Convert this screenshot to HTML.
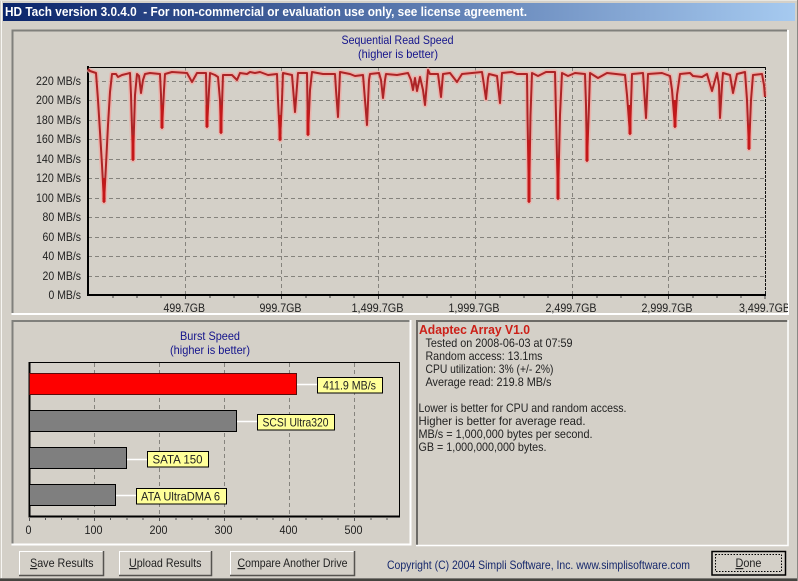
<!DOCTYPE html>
<html><head><meta charset="utf-8"><title>HD Tach</title>
<style>
html,body{margin:0;padding:0;background:#d4d0c8;overflow:hidden}
svg{display:block;position:absolute;left:0;top:0}
text{font-family:"Liberation Sans",sans-serif;font-size:12px;fill:#222}
.b{fill:#14148c}
.u{text-decoration:underline}
</style></head><body>
<svg width="798" height="581" viewBox="0 0 798 581" xmlns="http://www.w3.org/2000/svg">
<defs>
<linearGradient id="tg" x1="0" x2="1" y1="0" y2="0"><stop offset="0" stop-color="#0a246a"/><stop offset="1" stop-color="#a6caf0"/></linearGradient>
<clipPath id="c1"><rect x="0" y="0" width="788" height="581"/></clipPath>
</defs>
<rect width="798" height="581" fill="#d4d0c8"/>
<rect x="0" y="0" width="798" height="1" fill="#e8e6e0"/>
<rect x="1" y="1" width="1" height="578" fill="#f6f5f2"/>
<rect x="0" y="578" width="798" height="1" fill="#7c7a76"/>
<rect x="0" y="579" width="798" height="2" fill="#45443f"/>
<rect x="797" y="0" width="1" height="581" fill="#8a8884"/>
<rect x="3" y="3" width="792" height="18" fill="url(#tg)"/>
<text x="5" y="16" textLength="522" lengthAdjust="spacingAndGlyphs" style="fill:#fff;font-weight:bold;font-size:12.5px" xml:space="preserve">HD Tach version 3.0.4.0  - For non-commercial or evaluation use only, see license agreement.</text>

<!-- top panel -->
<path d="M12.5 314V30.500H787" fill="none" stroke="#80807c" stroke-width="2"/>
<path d="M11.500 314H788V30" fill="none" stroke="#fff" stroke-width="2"/>
<text class="b" x="341.500" y="44" textLength="112" lengthAdjust="spacingAndGlyphs">Sequential Read Speed</text>
<text class="b" x="358" y="58" textLength="80" lengthAdjust="spacingAndGlyphs">(higher is better)</text>

<g stroke="#85837d" stroke-width="1" stroke-dasharray="4 3" fill="none">
<path d="M88 81.500H765M88 100.500H765M88 120.500H765M88 139.500H765M88 159.500H765M88 178.500H765M88 198.500H765M88 217.500H765M88 237.500H765M88 256.500H765M88 276.500H765"/>
<path d="M185.500 67V295M281.500 67V295M378.500 67V295M475.500 67V295M572.500 67V295M668.500 67V295"/>
</g>
<path d="M88 67.500H765" stroke="#000" stroke-width="1"/>
<path d="M765.500 67V295" stroke="#111" stroke-width="1" stroke-dasharray="3 1"/>
<path d="M88 66V296" stroke="#000" stroke-width="2"/>
<path d="M87 295H766" stroke="#000" stroke-width="2"/>
<path d="M113 296v2M137 296v2M161 296v2M185.500 296v3M210 296v2M234 296v2M258 296v2M281.500 296v3M306 296v2M330 296v2M354 296v2M378.500 296v3M403 296v2M427 296v2M451 296v2M475.500 296v3M500 296v2M524 296v2M548 296v2M572.500 296v3M597 296v2M621 296v2M645 296v2M668.500 296v3M693 296v2M717 296v2M741 296v2M765 296v3" stroke="#444" stroke-width="1"/>

<text x="36" y="85" textLength="45" lengthAdjust="spacingAndGlyphs">220 MB/s</text>
<text x="36" y="104" textLength="45" lengthAdjust="spacingAndGlyphs">200 MB/s</text>
<text x="36" y="124" textLength="45" lengthAdjust="spacingAndGlyphs">180 MB/s</text>
<text x="36" y="143" textLength="45" lengthAdjust="spacingAndGlyphs">160 MB/s</text>
<text x="36" y="163" textLength="45" lengthAdjust="spacingAndGlyphs">140 MB/s</text>
<text x="36" y="182" textLength="45" lengthAdjust="spacingAndGlyphs">120 MB/s</text>
<text x="36" y="202" textLength="45" lengthAdjust="spacingAndGlyphs">100 MB/s</text>
<text x="42.500" y="221" textLength="38.500" lengthAdjust="spacingAndGlyphs">80 MB/s</text>
<text x="42.500" y="241" textLength="38.500" lengthAdjust="spacingAndGlyphs">60 MB/s</text>
<text x="42.500" y="260" textLength="38.500" lengthAdjust="spacingAndGlyphs">40 MB/s</text>
<text x="42.500" y="280" textLength="38.500" lengthAdjust="spacingAndGlyphs">20 MB/s</text>
<text x="48.500" y="299" textLength="32.500" lengthAdjust="spacingAndGlyphs">0 MB/s</text>

<g clip-path="url(#c1)">
<text x="163.500" y="312" textLength="41.500" lengthAdjust="spacingAndGlyphs">499.7GB</text>
<text x="259.500" y="312" textLength="42" lengthAdjust="spacingAndGlyphs">999.7GB</text>
<text x="351.500" y="312" textLength="52" lengthAdjust="spacingAndGlyphs">1,499.7GB</text>
<text x="448.500" y="312" textLength="51" lengthAdjust="spacingAndGlyphs">1,999.7GB</text>
<text x="545.500" y="312" textLength="51" lengthAdjust="spacingAndGlyphs">2,499.7GB</text>
<text x="641.500" y="312" textLength="51" lengthAdjust="spacingAndGlyphs">2,999.7GB</text>
<text x="739" y="312" textLength="51" lengthAdjust="spacingAndGlyphs">3,499.7GB</text>
</g>

<g fill="none" stroke-linejoin="round">
<polyline stroke="#f4a8a2" stroke-width="5" opacity=".75" points="88,69 90,71 96,73 98,100 100,132 102,165 104,202 106,165 108,125 110,92 112,74 116,74 118,77 122,75 130,73 131,95 133,160 135,95 137,74 139,76 141,93 143,80 145,74 150,73 160,74 161,95 162,128 164,90 165,74 172,72 187,73 192,82 197,73 206,73 207,127 209,90 210,73 215,75 218,77 220,100 221,133 223,75 232,75 237,80 240,73 247,74 250,72 255,73 260,72 268,75 277,74 278,100 280,140 282,100 283,73 292,75 295,112 298,73 307,73 308,135 310,90 312,72 323,74 335,74 336,90 338,117 340,72 350,74 355,76 363,75 365,100 367,125 369,80 370,74 379,73 381,80 383,98 385,80 386,74 397,75 408,73 411,80 413,90 415,78 417,91 420,77 423,90 425,105 428,70 430,74 438,74 441,97 443,74 450,73 457,82 462,74 482,72 484,85 486,99 488,78 489,74 497,76 500,103 502,73 512,72 517,74 527,74 527.5,115 529,202 530.5,115 532,73 538,76 546,72 555,72 556,115 558,199 560,115 562,73 568,76 575,73 585,74 586,105 587,161 589,105 590,73 598,78 607,73 625,75 627,95 630,134 632,74 643,73 646,118 648,74 662,73 670,76 672,90 675,127 677,95 680,74 690,73 693,76 702,77 707,74 712,91 717,73 719,85 720,118 722,85 723,73 730,75 733,93 737,74 745,72 747,100 749,149 751,100 753,75 762,74 764,85 765,97"/>
<polyline stroke="#ad2426" stroke-width="2" points="88,69 90,71 96,73 98,100 100,132 102,165 104,202 106,165 108,125 110,92 112,74 116,74 118,77 122,75 130,73 131,95 133,160 135,95 137,74 139,76 141,93 143,80 145,74 150,73 160,74 161,95 162,128 164,90 165,74 172,72 187,73 192,82 197,73 206,73 207,127 209,90 210,73 215,75 218,77 220,100 221,133 223,75 232,75 237,80 240,73 247,74 250,72 255,73 260,72 268,75 277,74 278,100 280,140 282,100 283,73 292,75 295,112 298,73 307,73 308,135 310,90 312,72 323,74 335,74 336,90 338,117 340,72 350,74 355,76 363,75 365,100 367,125 369,80 370,74 379,73 381,80 383,98 385,80 386,74 397,75 408,73 411,80 413,90 415,78 417,91 420,77 423,90 425,105 428,70 430,74 438,74 441,97 443,74 450,73 457,82 462,74 482,72 484,85 486,99 488,78 489,74 497,76 500,103 502,73 512,72 517,74 527,74 527.5,115 529,202 530.5,115 532,73 538,76 546,72 555,72 556,115 558,199 560,115 562,73 568,76 575,73 585,74 586,105 587,161 589,105 590,73 598,78 607,73 625,75 627,95 630,134 632,74 643,73 646,118 648,74 662,73 670,76 672,90 675,127 677,95 680,74 690,73 693,76 702,77 707,74 712,91 717,73 719,85 720,118 722,85 723,73 730,75 733,93 737,74 745,72 747,100 749,149 751,100 753,75 762,74 764,85 765,97"/>
<path d="M104 178V202M133 135V160M162 105V128M207 105V127M221 105V133M280 115V140M308 110V135M529 140V202M558 158V199M587 130V161M630 105V134M675 100V127M749 125V149" stroke="#c4181a" stroke-width="3"/>
</g>

<!-- burst panel -->
<path d="M12.500 544V321H410" fill="none" stroke="#80807c" stroke-width="2"/>
<path d="M11.500 544.500H410.500V320" fill="none" stroke="#fff" stroke-width="2"/>
<text class="b" x="180" y="340" textLength="60" lengthAdjust="spacingAndGlyphs">Burst Speed</text>
<text class="b" x="170" y="354" textLength="80" lengthAdjust="spacingAndGlyphs">(higher is better)</text>

<g stroke="#85837d" stroke-dasharray="4 3" fill="none">
<path d="M94.500 363V516M159.500 363V516M224.500 363V516M289.500 363V516M354.500 363V516"/>
</g>
<path d="M29 362.500H399.500V517" fill="none" stroke="#000" stroke-width="1"/>
<path d="M29.500 362V517" stroke="#000" stroke-width="2"/>
<path d="M28.500 516.500H400" stroke="#000" stroke-width="2"/>
<path d="M29.500 518v3M45.500 518v2M61.500 518v2M78 518v2M94.500 518v3M110.500 518v2M127 518v2M143 518v2M159.500 518v3M176 518v2M192 518v2M208 518v2M224.500 518v3M241 518v2M257 518v2M273 518v2M289.500 518v3M306 518v2M322 518v2M338 518v2M354.500 518v3M371 518v2M387 518v2" stroke="#555"/>

<rect x="29.500" y="373.500" width="267" height="21" fill="#fe0000" stroke="#5a0c0c"/>
<rect x="29.500" y="410.500" width="207" height="21" fill="#7f7f7f" stroke="#000"/>
<rect x="29.500" y="447.500" width="97" height="21" fill="#7f7f7f" stroke="#000"/>
<rect x="29.500" y="484.500" width="86" height="21" fill="#7f7f7f" stroke="#000"/>
<path d="M297 384.500H317M237 421.500H257M127 459.500H147M116 495.500H136" stroke="#fff" stroke-width="1.500"/>
<rect x="317.500" y="377.500" width="65" height="15.500" fill="#ffff99" stroke="#000"/>
<rect x="257.500" y="414.500" width="77" height="15.500" fill="#ffff99" stroke="#000"/>
<rect x="147.500" y="451.500" width="61" height="15.500" fill="#ffff99" stroke="#000"/>
<rect x="136.500" y="488.500" width="90" height="15.500" fill="#ffff99" stroke="#000"/>
<text x="323" y="389.500" textLength="53" lengthAdjust="spacingAndGlyphs">411.9 MB/s</text>
<text x="262.500" y="426.500" textLength="66" lengthAdjust="spacingAndGlyphs">SCSI Ultra320</text>
<text x="152.500" y="463.500" textLength="50" lengthAdjust="spacingAndGlyphs">SATA 150</text>
<text x="141" y="500.500" textLength="79" lengthAdjust="spacingAndGlyphs">ATA UltraDMA 6</text>
<text x="25.500" y="534" textLength="6" lengthAdjust="spacingAndGlyphs">0</text>
<text x="84.500" y="534" textLength="18" lengthAdjust="spacingAndGlyphs">100</text>
<text x="149.500" y="534" textLength="18" lengthAdjust="spacingAndGlyphs">200</text>
<text x="214.500" y="534" textLength="18" lengthAdjust="spacingAndGlyphs">300</text>
<text x="279.500" y="534" textLength="18" lengthAdjust="spacingAndGlyphs">400</text>
<text x="344.500" y="534" textLength="18" lengthAdjust="spacingAndGlyphs">500</text>

<!-- info panel -->
<path d="M417 545V321H788" fill="none" stroke="#6c6a66" stroke-width="2"/>
<path d="M416 545.500H788V320" fill="none" stroke="#fff" stroke-width="1.500"/>
<text x="419" y="334" textLength="111" lengthAdjust="spacingAndGlyphs" style="fill:#cc2018;font-weight:bold;font-size:13px">Adaptec Array V1.0</text>
<text x="425.500" y="347" textLength="147" lengthAdjust="spacingAndGlyphs">Tested on 2008-06-03 at 07:59</text>
<text x="425.500" y="360" textLength="117" lengthAdjust="spacingAndGlyphs">Random access: 13.1ms</text>
<text x="425.500" y="373" textLength="128" lengthAdjust="spacingAndGlyphs">CPU utilization: 3% (+/- 2%)</text>
<text x="425.500" y="386" textLength="126" lengthAdjust="spacingAndGlyphs">Average read: 219.8 MB/s</text>
<text x="418.500" y="412" textLength="208" lengthAdjust="spacingAndGlyphs">Lower is better for CPU and random access.</text>
<text x="418.500" y="425" textLength="167" lengthAdjust="spacingAndGlyphs">Higher is better for average read.</text>
<text x="418.500" y="438" textLength="174" lengthAdjust="spacingAndGlyphs">MB/s = 1,000,000 bytes per second.</text>
<text x="418.500" y="451" textLength="128" lengthAdjust="spacingAndGlyphs">GB = 1,000,000,000 bytes.</text>

<!-- buttons -->
<g fill="none">
<path d="M19.500 575V551.500H103" stroke="#fff"/><path d="M19 575.500H103.500V551" stroke="#55534f" stroke-width="1.500"/>
<path d="M119.500 575V551.500H211" stroke="#fff"/><path d="M119 575.500H211.500V551" stroke="#55534f" stroke-width="1.500"/>
<path d="M230.500 575V551.500H354" stroke="#fff"/><path d="M230 575.500H354.500V551" stroke="#55534f" stroke-width="1.500"/>
<rect x="712" y="551.500" width="73.500" height="23.500" stroke="#000" stroke-width="1.500"/>
<rect x="715.500" y="554.500" width="66" height="17" stroke="#000" stroke-width="1" stroke-dasharray="1.500 1.500"/>
</g>
<text x="30" y="567" textLength="63.500" lengthAdjust="spacingAndGlyphs"><tspan class="u">S</tspan>ave Results</text>
<text x="129" y="567" textLength="72.500" lengthAdjust="spacingAndGlyphs"><tspan class="u">U</tspan>pload Results</text>
<text x="237.500" y="567" textLength="110" lengthAdjust="spacingAndGlyphs"><tspan class="u">C</tspan>ompare Another Drive</text>
<text x="735.500" y="567" textLength="26" lengthAdjust="spacingAndGlyphs"><tspan class="u">D</tspan>one</text>
<text x="387" y="569" textLength="303" lengthAdjust="spacingAndGlyphs" style="fill:#16286c">Copyright (C) 2004 Simpli Software, Inc. www.simplisoftware.com</text>
</svg>
</body></html>
